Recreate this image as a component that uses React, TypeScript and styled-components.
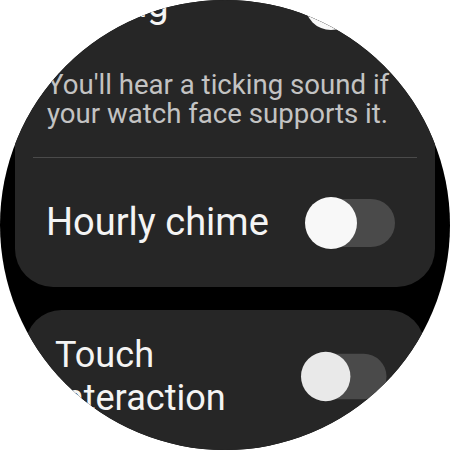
import React from 'react'
import styled, {createGlobalStyle} from 'styled-components'

const GlobalStyle = createGlobalStyle`
  html, body {
    margin: 0;
    padding: 0;
    background: #ffffff;
  }

  body {
    font-family: Roboto, 'Noto Sans', sans-serif;
  }
`

const Screen = styled.div`
  position: relative;
  width: 450px;
  height: 450px;
  border-radius: 50%;
  overflow: hidden;
  background-color: #000;
`

// scrolled list, the first card starts above the visible area
const List = styled.div`
  display: flex;
  flex-direction: column;
  gap: 23px;
  margin-top: -68px;
  padding: 0 15px;
`

const Card = styled.section<{$scale?: number}>`
  background-color: #262626;
  border-radius: 38px;
  padding: ${({$scale}) => ($scale ? '25px 18px 40px' : '46px 18px 0')};
  transform: scale(${({$scale}) => $scale ?? 1});
  transform-origin: top center;
`

const Row = styled.div<{$height?: number}>`
  display: flex;
  align-items: center;
  justify-content: space-between;
  gap: 16px;
  padding: 0 22px 0 13px;
  min-height: ${({$height}) => $height ?? 52}px;
`

const Title = styled.div`
  color: #f4f4f4;
  font-size: 38px;
  line-height: 45px;
  max-width: 250px;
`

const Description = styled.p`
  margin: 40px 0 0;
  padding: 0 24px 0 14px;
  color: #c3c3c3;
  font-size: 27.6px;
  line-height: 29px;
`

const Divider = styled.hr`
  margin: 29px 0 0;
  border: 0;
  height: 1px;
  background-color: #4a4a4a;
`

const Switch = styled.span`
  position: relative;
  flex: none;
  width: 90px;
  height: 52px;
`

const Track = styled.span`
  position: absolute;
  right: 0;
  top: 2px;
  width: 76px;
  height: 48px;
  border-radius: 24px;
  background-color: #4a4a4a;
`

const Knob = styled.span<{$dim?: boolean}>`
  position: absolute;
  left: 0;
  top: 0;
  width: 52px;
  height: 52px;
  border-radius: 50%;
  background-color: ${({$dim}) => ($dim ? '#e9e9e9' : '#f8f8f8')};
`

const Toggle = ({dim}: {dim?: boolean}) => (
  <Switch role="switch" aria-checked={false}>
    <Track />
    <Knob $dim={dim} />
  </Switch>
)

const App = () => {
  return (
    <>
      <GlobalStyle />
      <Screen>
        <List>
          <Card>
            <Row>
              <Title>Ticking</Title>
              <Toggle />
            </Row>
            <Description>
              You'll hear a ticking sound if your watch face supports it.
            </Description>
            <Divider />
            <Row $height={129}>
              <Title>Hourly chime</Title>
              <Toggle />
            </Row>
          </Card>
          <Card $scale={0.95}>
            <Row $height={90}>
              <Title>Touch interaction</Title>
              <Toggle dim />
            </Row>
          </Card>
        </List>
      </Screen>
    </>
  )
}

export default App
